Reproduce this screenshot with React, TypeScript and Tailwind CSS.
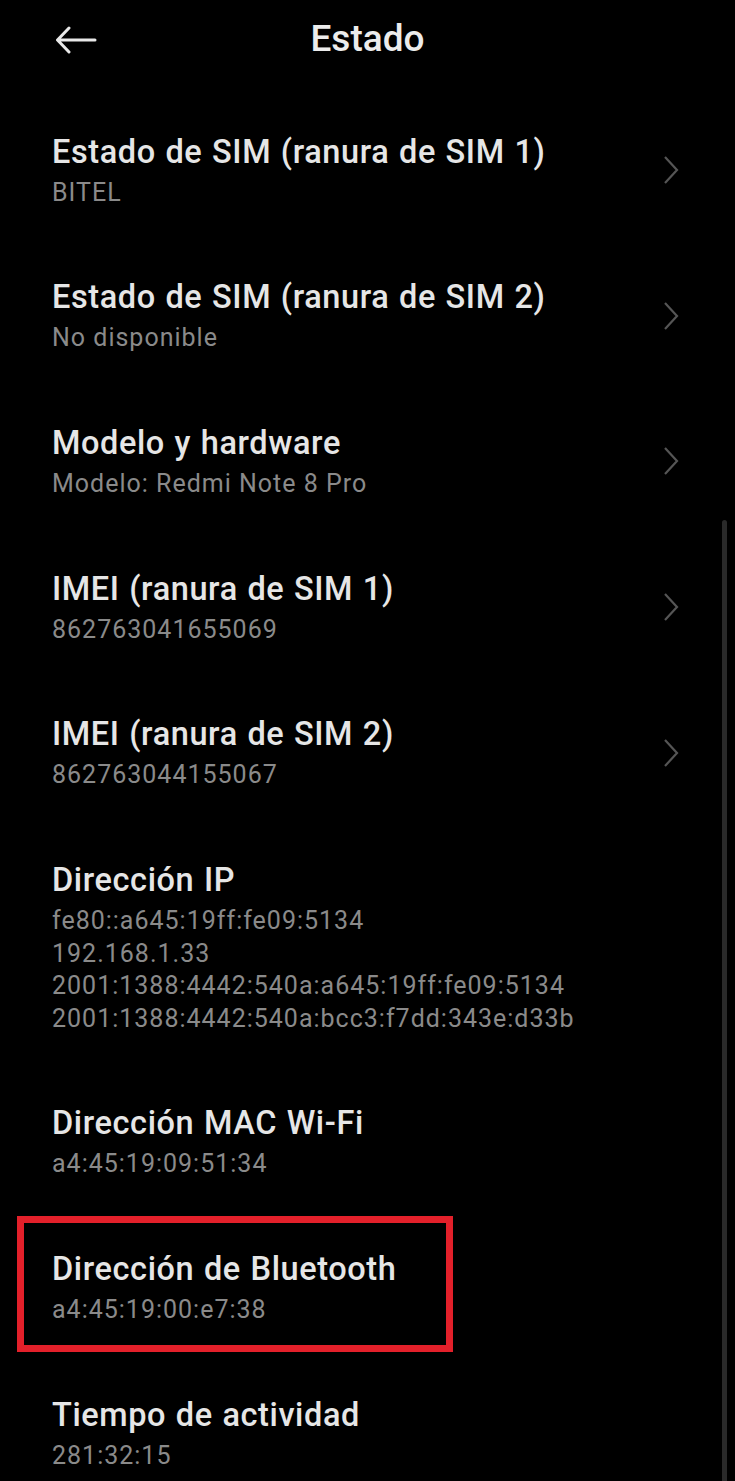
import React from "react"

type Item = {
  title: string
  lines: string[]
  chevron?: boolean
  marked?: boolean
}

const items: Item[] = [
  { title: "Estado de SIM (ranura de SIM 1)", lines: ["BITEL"], chevron: true },
  { title: "Estado de SIM (ranura de SIM 2)", lines: ["No disponible"], chevron: true },
  { title: "Modelo y hardware", lines: ["Modelo: Redmi Note 8 Pro"], chevron: true },
  { title: "IMEI (ranura de SIM 1)", lines: ["862763041655069"], chevron: true },
  { title: "IMEI (ranura de SIM 2)", lines: ["862763044155067"], chevron: true },
  {
    title: "Dirección IP",
    lines: [
      "fe80::a645:19ff:fe09:5134",
      "192.168.1.33",
      "2001:1388:4442:540a:a645:19ff:fe09:5134",
      "2001:1388:4442:540a:bcc3:f7dd:343e:d33b",
    ],
  },
  { title: "Dirección MAC Wi-Fi", lines: ["a4:45:19:09:51:34"] },
  { title: "Dirección de Bluetooth", lines: ["a4:45:19:00:e7:38"], marked: true },
  { title: "Tiempo de actividad", lines: ["281:32:15"] },
]

const Chevron = () => (
  <svg width="18" height="30" viewBox="0 0 18 30" fill="none">
    <path d="M3 2 L15 15 L3 28" stroke="#555555" strokeWidth="2.2" />
  </svg>
)

const BackArrow = () => (
  <svg width="42" height="28" viewBox="0 0 42 28" fill="none">
    <path
      d="M40 14 H3 M14 2 L2.5 14 L14 26"
      stroke="#e8e8e8"
      strokeWidth="3"
      strokeLinecap="round"
      strokeLinejoin="round"
    />
  </svg>
)

const Row = ({ item }: { item: Item }) => {
  return (
    <div className="relative flex items-center pl-[52px] pr-[55px] py-[33.6px]">
      <div className="flex-1 flex flex-col">
        <div className="text-[32.5px] font-medium leading-[42px] tracking-[0.6px] [word-spacing:1px] text-[#e6e6e6]">
          {item.title}
        </div>
        <div className="mt-[4px] flex flex-col">
          {item.lines.map((line) => (
            <div key={line} className="text-[25px] leading-[32.5px] tracking-[1px] text-[#8a8a8a]">
              {line}
            </div>
          ))}
        </div>
      </div>
      {item.chevron && <Chevron />}
      {item.marked && (
        <div className="absolute top-[2px] left-[17px] w-[436px] h-[136px] border-[7px] border-[#e3202a]" />
      )}
    </div>
  )
}

export default function App() {
  return (
    <div
      className="relative w-[735px] h-[1481px] overflow-hidden bg-black"
      style={{ fontFamily: "Roboto, 'Noto Sans', sans-serif" }}
    >
      <div className="relative flex items-center justify-center h-[78px]">
        <div className="absolute left-[55px] top-[26px]">
          <BackArrow />
        </div>
        <div className="text-[37px] font-medium text-[#ececec]">Estado</div>
      </div>
      <div className="pt-[19px] flex flex-col">
        {items.map((item) => (
          <Row key={item.title} item={item} />
        ))}
      </div>
      <div className="absolute right-[8px] top-[520px] w-[5px] h-[980px] rounded-full bg-[#2a2a2a]" />
    </div>
  )
}
